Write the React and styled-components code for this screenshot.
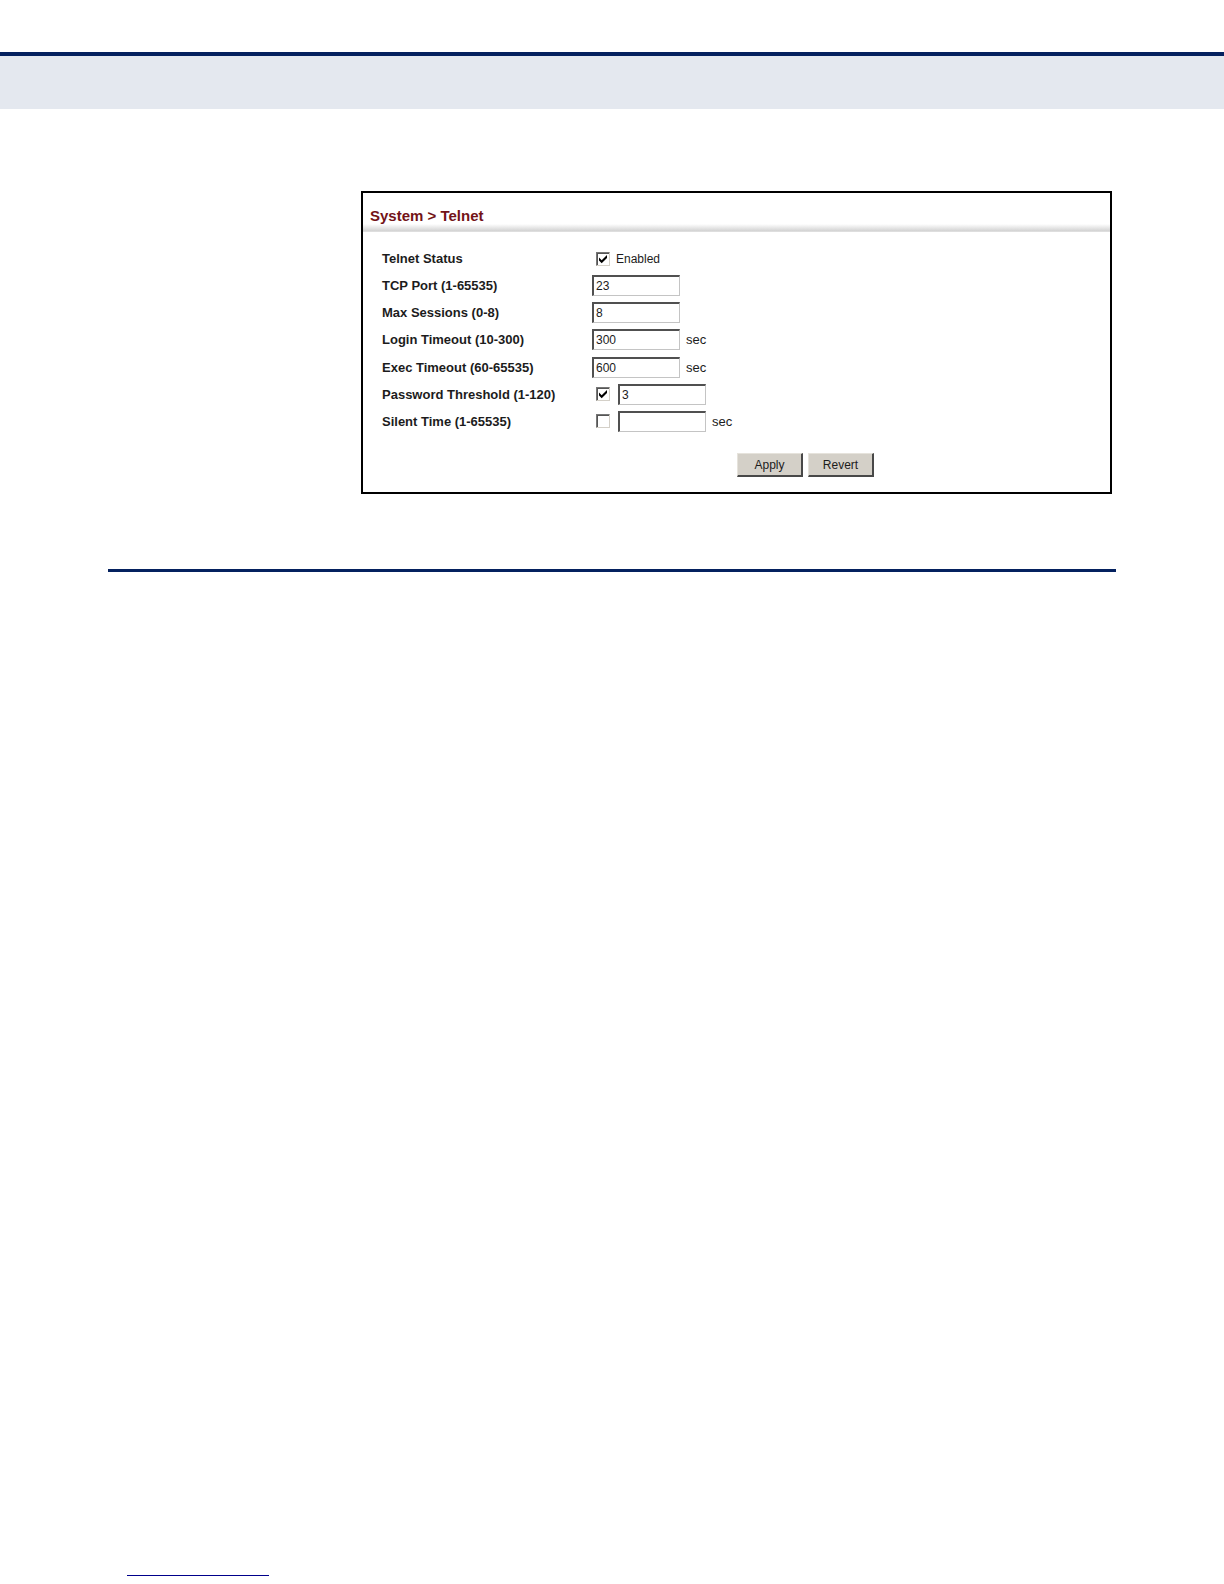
import React, { useState } from "react";
import styled, { createGlobalStyle } from "styled-components";

const GlobalStyle = createGlobalStyle`
* {
    box-sizing: border-box;
}
body {
    margin: 0;
    background: #ffffff;
    color: #1c1c1c;
    font-family: "Liberation Sans", Arial, sans-serif;
    font-size: 12px;
}
`;

const initial = {
    enabled: true,
    port: "23",
    sessions: "8",
    login: "300",
    exec: "600",
    thresholdOn: true,
    threshold: "3",
    silentOn: false,
    silent: "",
};

const Check = ({ id, checked, onChange, label }) => (
    <CheckBox>
        <input type="checkbox" id={id} checked={checked} onChange={onChange} aria-label={label} />
        {checked && (
            <svg viewBox="0 0 14 14" aria-hidden="true">
                <path d="M3 5.5v3l2.7 2.7L11 6V3L5.7 8.2z" fill="#000000" />
            </svg>
        )}
    </CheckBox>
);

const App = () => {
    const [values, setValues] = useState(initial);

    const handleChange = (event) => {
        const { id, type, value, checked } = event.target;
        setValues({ ...values, [id]: type === "checkbox" ? checked : value });
    };
    const handleRevert = () => {
        setValues(initial);
    };
    const handleSubmit = (event) => {
        event.preventDefault();
    };

    const field = (id) => <TextBox type="text" id={id} value={values[id]} onChange={handleChange} />;

    return (
        <Page>
            <GlobalStyle />
            <Banner />
            <Main>
                <Panel onSubmit={handleSubmit}>
                    <Title>System &gt; Telnet</Title>
                    <Fields>
                        <Row>
                            <Name htmlFor="enabled">Telnet Status</Name>
                            <Check id="enabled" checked={values.enabled} onChange={handleChange} />
                            <Text htmlFor="enabled">Enabled</Text>
                        </Row>
                        <Row>
                            <Name htmlFor="port">TCP Port (1-65535)</Name>
                            {field("port")}
                        </Row>
                        <Row>
                            <Name htmlFor="sessions">Max Sessions (0-8)</Name>
                            {field("sessions")}
                        </Row>
                        <Row>
                            <Name htmlFor="login">Login Timeout (10-300)</Name>
                            {field("login")}
                            <Unit>sec</Unit>
                        </Row>
                        <Row>
                            <Name htmlFor="exec">Exec Timeout (60-65535)</Name>
                            {field("exec")}
                            <Unit>sec</Unit>
                        </Row>
                        <Row>
                            <Name htmlFor="threshold">Password Threshold (1-120)</Name>
                            <Check id="thresholdOn" checked={values.thresholdOn} onChange={handleChange} label="Use password threshold" />
                            {field("threshold")}
                        </Row>
                        <Row>
                            <Name htmlFor="silent">Silent Time (1-65535)</Name>
                            <Check id="silentOn" checked={values.silentOn} onChange={handleChange} label="Use silent time" />
                            {field("silent")}
                            <Unit>sec</Unit>
                        </Row>
                    </Fields>
                    <Actions>
                        <Button type="submit">Apply</Button>
                        <Button type="button" onClick={handleRevert}>Revert</Button>
                    </Actions>
                </Panel>
                <Divider />
            </Main>
            <Footer>
                <FooterRule />
            </Footer>
        </Page>
    );
};

const Page = styled.div`
    display: flex;
    flex-direction: column;
    min-height: 100vh;
    padding-top: 52px;
`;

const Banner = styled.header`
    height: 57px;
    border-top: 4px solid #04215f;
    background: #e4e8ef;
`;

const Main = styled.main`
    padding: 82px 108px 0;
`;

const Panel = styled.form`
    margin: 0 4px 0 253px;
    padding-bottom: 15px;
    border: 2px solid #000000;
`;

const Title = styled.h1`
    margin: 0;
    padding: 14px 7px 7px;
    border-bottom: 1px solid #dedede;
    background: linear-gradient(to top, #d2d2d2, #ffffff) bottom / 100% 7px no-repeat;
    color: #731317;
    font-size: 15px;
    line-height: 17px;
`;

const Fields = styled.div`
    display: grid;
    grid-auto-rows: 1fr;
    min-height: 190px;
    margin-top: 13px;
    padding-left: 19px;
`;

const Row = styled.div`
    display: flex;
    align-items: center;
`;

const Name = styled.label`
    width: 210px;
    font-size: 13px;
    font-weight: bold;
`;

const CheckBox = styled.span`
    position: relative;
    width: 14px;
    height: 14px;
    margin: 0 8px 0 4px;

    input {
        appearance: none;
        display: block;
        width: 14px;
        height: 14px;
        margin: 0;
        border: 1px solid;
        border-color: #777777 #d4d0c8 #d4d0c8 #777777;
        box-shadow: inset 1px 1px #555555;
        background: #ffffff;
    }
    svg {
        position: absolute;
        inset: 0;
        pointer-events: none;
    }
`;

const TextBox = styled.input`
    width: 88px;
    height: 21px;
    padding: 0 2px;
    border: 1px solid;
    border-width: 2px 1px 1px 2px;
    border-color: #505050 #c4c4c4 #c4c4c4 #505050;
    border-radius: 0;
    background: #ffffff;
    color: #1c1c1c;
    font-family: inherit;
    font-size: 12px;
`;

const Text = styled.label`
    margin-left: -2px;
`;

const Unit = styled.span`
    margin-left: 6px;
    font-size: 13px;
`;

const Actions = styled.div`
    display: flex;
    gap: 5px;
    margin-top: 18px;
    padding-left: 374px;
`;

const Button = styled.button`
    width: 66px;
    height: 24px;
    padding: 0;
    border: 1px solid;
    border-width: 1px 2px 2px 1px;
    border-color: #e6e3dc #484848 #484848 #e6e3dc;
    border-radius: 0;
    background: #d4d0c8;
    color: #1c1c1c;
    font-family: inherit;
    font-size: 12px;
`;

const Divider = styled.hr`
    height: 3px;
    margin: 75px 0 0;
    border: 0;
    background: #04215f;
`;

const Footer = styled.footer`
    margin-top: auto;
    padding: 0 127px 8px;
`;

const FooterRule = styled.div`
    width: 142px;
    height: 1px;
    background: #00008b;
`;

export default App;
